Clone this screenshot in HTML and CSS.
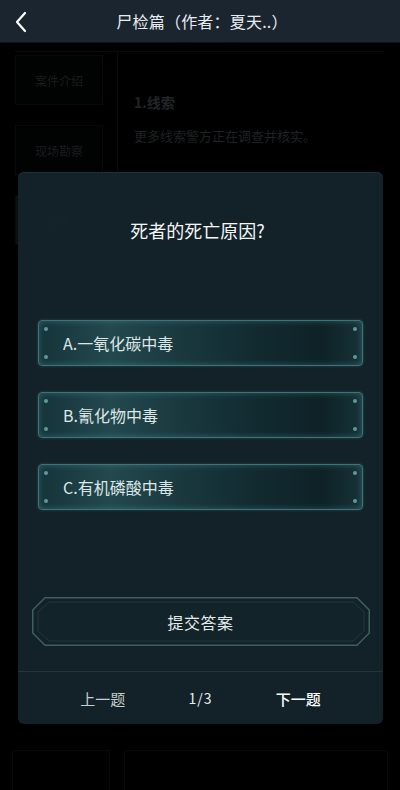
FILE: index.html
```html
<!DOCTYPE html>
<html lang="zh-CN">
<head>
  <meta charset="UTF-8">
  <meta name="viewport" content="width=device-width, initial-scale=1.0">
  <title>尸检篇</title>
  <link rel="stylesheet" href="styles.css">
</head>
<body>

  <header class="top-bar">
    <svg class="back" width="14" height="22" viewBox="0 0 14 22">
      <path d="M11 2 L3 11 L11 20" fill="none" stroke="#ffffff" stroke-width="2.2" stroke-linecap="round" stroke-linejoin="round"/>
    </svg>
    <h1 class="top-title">尸检篇（作者：夏天..）</h1>
  </header>

  <!-- 案件页面（弹窗后面） -->
  <main class="case-page">
    <nav class="case-tabs">
      <div class="case-tab">案件介绍</div>
      <div class="case-tab">现场勘察</div>
      <div class="case-tab">线索</div>
    </nav>
    <section class="case-body">
      <h2 class="clue-title">1.线索</h2>
      <p class="clue-text">更多线索警方正在调查并核实。</p>
    </section>
  </main>
  <div class="case-bottom">
    <div class="bottom-box"></div>
    <div class="bottom-box wide"></div>
  </div>

  <!-- 答题弹窗 -->
  <div class="quiz">
    <h3 class="quiz-question">死者的死亡原因?</h3>

    <div class="options">
      <div class="option">A.一氧化碳中毒</div>
      <div class="option">B.氰化物中毒</div>
      <div class="option">C.有机磷酸中毒</div>
    </div>

    <div class="submit">
      <svg class="submit-frame" width="338" height="49" viewBox="0 0 338 49">
        <path d="M13 0.75 H325 L337.25 13 V36 L325 48.25 H13 L0.75 36 V13 Z" fill="none" stroke="#3f5f5f" stroke-width="1.5"/>
        <path d="M17 5 H321 L332 15 V34 L321 44 H17 L6 34 V15 Z" fill="#122329" stroke="#24393d" stroke-width="1"/>
      </svg>
      <span class="submit-text">提交答案</span>
    </div>

    <div class="quiz-nav">
      <span class="nav-prev">上一题</span>
      <span class="nav-count">1/3</span>
      <span class="nav-next">下一题</span>
    </div>
  </div>

</body>
</html>
```

FILE: styles.css
```css
/* Global */
body {
  margin: 0;
  width: 400px;
  height: 790px;
  overflow: hidden;
  background: #000;
  color: #fff;
  font-family: "Noto Sans CJK SC", "Noto Sans", sans-serif;
  position: relative;
}

/* Thanh tiêu đề */
.top-bar {
  height: 42px;
  background: #1b2530;
  display: flex;
  align-items: center;
  justify-content: center;
  position: relative;
  border-bottom: 1px solid #0c1218;
}

.back {
  position: absolute;
  left: 14px;
  top: 11px;
}

.top-title {
  margin: 0 0 0 4px;
  font-size: 16px;
  font-weight: normal;
  color: #e8ecef;
  letter-spacing: 0.2px;
}

/* Trang phía sau (bị che tối) */
.case-page {
  display: flex;
  margin: 8px 16px 0 15px;
  height: 240px;
  border-top: 1px solid #070b0d;
}

.case-tabs {
  width: 88px;
  display: flex;
  flex-direction: column;
  gap: 20px;
  padding-top: 3px;
  border-right: 1px solid #080c0e;
  padding-right: 14px;
}

.case-tab {
  height: 48px;
  display: flex;
  align-items: center;
  justify-content: center;
  font-size: 12px;
  color: #1a1d1f;
  border: 1px solid #07090b;
  background: #010202;
}

.case-tab:last-child {
  background: #0a1012;
}

.case-body {
  flex: 1;
  padding: 40px 0 0 16px;
}

.clue-title {
  margin: 0;
  font-size: 14px;
  color: #222527;
}

.clue-text {
  margin: 14px 0 0;
  font-size: 13px;
  color: #1f2225;
}

.case-bottom {
  position: absolute;
  left: 12px;
  right: 12px;
  top: 750px;
  display: flex;
  gap: 14px;
}

.bottom-box {
  width: 96px;
  height: 50px;
  border: 1px solid #07090b;
}

.bottom-box.wide {
  flex: 1;
}

/* Popup câu hỏi */
.quiz {
  position: absolute;
  left: 18px;
  top: 172px;
  width: 365px;
  height: 552px;
  box-sizing: border-box;
  border-radius: 6px;
  background: rgba(19, 36, 42, 0.95);
  box-shadow: inset 0 1px 0 #1d3238;
  display: flex;
  flex-direction: column;
  align-items: center;
  padding-top: 46px;
}

.quiz-question {
  margin: 0 6px 0 0;
  height: 24px;
  line-height: 24px;
  font-size: 18px;
  font-weight: normal;
  color: #f4f6f6;
}

.options {
  margin-top: 78px;
  display: flex;
  flex-direction: column;
  gap: 26px;
}

.option {
  position: relative;
  width: 325px;
  height: 46px;
  box-sizing: border-box;
  padding-left: 24px;
  display: flex;
  align-items: center;
  font-size: 16px;
  color: #dfe6e6;
  border: 1px solid #3b7479;
  border-radius: 4px;
  background: linear-gradient(90deg, #16333a 0%, #22494e 22%, #1a3a40 42%, #112a30 68%, #0e2227 88%, #163338 100%);
  box-shadow: inset 0 0 6px rgba(100, 180, 180, 0.35), 0 0 3px rgba(70, 140, 145, 0.4);
}

/* chấm tròn ở bốn góc */
.option::before,
.option::after {
  content: "";
  position: absolute;
  top: 6px;
  width: 4px;
  height: 4px;
  border-radius: 50%;
  background: #5c9a9c;
  box-shadow: 0 28px 0 #5c9a9c;
}

.option::before {
  left: 5px;
}

.option::after {
  right: 5px;
}

.submit {
  margin-top: 87px;
  position: relative;
  width: 338px;
  height: 49px;
  display: flex;
  align-items: center;
  justify-content: center;
}

.submit-frame {
  position: absolute;
  left: 0;
  top: 0;
}

.submit-text {
  position: relative;
  font-size: 16px;
  color: #e6ebeb;
  letter-spacing: 0.5px;
}

.quiz-nav {
  margin-top: 25px;
  align-self: stretch;
  flex: 1;
  border-top: 1px solid #22363a;
  display: flex;
  align-items: center;
  padding: 0 36px;
  font-size: 15px;
}

.quiz-nav span {
  flex: 1;
  text-align: center;
}

.nav-prev {
  color: #c5cccd;
}

.nav-count {
  color: #e8ecec;
  font-size: 14px;
  letter-spacing: 1px;
}

.nav-next {
  color: #ffffff;
  font-weight: 500;
}
```
